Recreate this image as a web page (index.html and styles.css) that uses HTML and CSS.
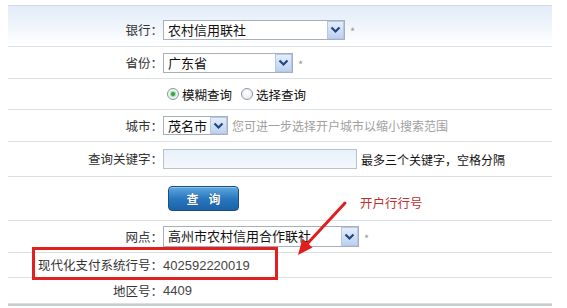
FILE: index.html
```html
<!DOCTYPE html>
<html lang="zh-CN">
<head>
<meta charset="utf-8">
<title>行号查询</title>
<link rel="stylesheet" href="styles.css">
</head>
<body>
<div class="page">
  <div class="panel">
    <div class="row row-head">
      <div class="label">银行<span class="colon">：</span></div>
      <div class="field">
        <div class="sel sel-bank"><span class="sel-text">农村信用联社</span><span class="sel-btn"><svg width="11" height="8" viewBox="0 0 11 8"><path d="M1.5 1.5 L5.5 5.5 L9.5 1.5" fill="none" stroke="#24467f" stroke-width="2.2"/></svg></span></div>
        <span class="req">*</span>
      </div>
    </div>
    <div class="row row-2">
      <div class="label">省份<span class="colon">：</span></div>
      <div class="field">
        <div class="sel sel-prov"><span class="sel-text">广东省</span><span class="sel-btn"><svg width="11" height="8" viewBox="0 0 11 8"><path d="M1.5 1.5 L5.5 5.5 L9.5 1.5" fill="none" stroke="#24467f" stroke-width="2.2"/></svg></span></div>
        <span class="req">*</span>
      </div>
    </div>
    <div class="row row-3">
      <div class="label"></div>
      <div class="field radios">
        <span class="radio checked"></span><span class="rlabel">模糊查询</span>
        <span class="radio"></span><span class="rlabel">选择查询</span>
      </div>
    </div>
    <div class="row row-4">
      <div class="label">城市<span class="colon">：</span></div>
      <div class="field">
        <div class="sel sel-city"><span class="sel-text">茂名市</span><span class="sel-btn"><svg width="11" height="8" viewBox="0 0 11 8"><path d="M1.5 1.5 L5.5 5.5 L9.5 1.5" fill="none" stroke="#24467f" stroke-width="2.2"/></svg></span></div>
        <span class="hint">您可进一步选择开户城市以缩小搜索范围</span>
      </div>
    </div>
    <div class="row row-5">
      <div class="label">查询关键字<span class="colon">：</span></div>
      <div class="field">
        <div class="kw"></div>
        <span class="note">最多三个关键字，空格分隔</span>
      </div>
    </div>
    <div class="row row-6">
      <div class="label"></div>
      <div class="field">
        <button class="btn" type="button">查询</button>
      </div>
    </div>
    <div class="row row-7">
      <div class="label">网点<span class="colon">：</span></div>
      <div class="field">
        <div class="sel sel-net"><span class="sel-text">高州市农村信用合作联社</span><span class="sel-btn"><svg width="11" height="8" viewBox="0 0 11 8"><path d="M1.5 1.5 L5.5 5.5 L9.5 1.5" fill="none" stroke="#24467f" stroke-width="2.2"/></svg></span></div>
        <span class="req">*</span>
      </div>
    </div>
    <div class="row row-8">
      <div class="label">现代化支付系统行号<span class="colon">：</span></div>
      <div class="field"><span class="val">402592220019</span></div>
    </div>
    <div class="row row-9">
      <div class="label">地区号<span class="colon">：</span></div>
      <div class="field"><span class="val">4409</span></div>
    </div>
    <div class="redbox"></div>
  </div>
  <span class="callout">开户行行号</span>
  <svg class="arrow" width="567" height="308" viewBox="0 0 567 308">
    <line x1="345" y1="203" x2="308" y2="243" stroke="#e01e1e" stroke-width="3" stroke-linecap="round"/>
    <polygon points="298,255 312.5,247.5 302.5,238.5" fill="#e01e1e"/>
  </svg>
</div>
</body>
</html>
```

FILE: styles.css
```css
html, body {
  margin: 0;
  padding: 0;
  background: #fff;
}
body {
  font-family: "Noto Sans CJK SC", "Noto Sans", sans-serif;
  font-size: 12px;
  color: #222;
}
.page {
  position: relative;
  width: 567px;
  height: 308px;
  overflow: hidden;
  padding-top: 5px;
  box-sizing: border-box;
}
.panel {
  position: relative;
  margin-left: 8px;
  width: 544px;
  border-top: 1px solid #d3dae3;
  border-bottom: 2px solid #c6cdd0;
}
.row {
  display: flex;
  align-items: center;
  border-bottom: 1px solid #dcdfe3;
  box-sizing: content-box;
}
.row:last-of-type { border-bottom: none; }
.row-head {
  height: 32px;
  padding-top: 8px;
  background: linear-gradient(#e2ebf8, #f6f9fd 70%, #fff);
}
.row-2 { height: 31px; }
.row-3 { height: 30px; }
.row-4 { height: 31px; }
.row-5 { height: 34px; }
.row-6 { height: 43px; }
.row-7 { height: 31px; }
.row-8 { height: 24px; }
.row-9 { height: 25px; }
.label {
  width: 155px;
  flex: none;
  text-align: right;
  color: #333;
  line-height: 16px;
  font-size: 12.5px;
}
.colon {
  font-family: "Noto Sans CJK TC", "Noto Sans CJK SC", sans-serif;
}
.field {
  display: flex;
  align-items: center;
}
.sel {
  display: flex;
  align-items: stretch;
  height: 20px;
  box-sizing: border-box;
  border: 1px solid #a7b0ba;
  background: #fff;
}
.sel-text {
  flex: 1;
  padding-left: 4px;
  font-size: 13px;
  line-height: 18px;
  color: #111;
  white-space: nowrap;
  overflow: hidden;
}
.sel-btn {
  width: 15px;
  border: 1px solid #b3c7e6;
  background: linear-gradient(#e3edfc, #bcd1f1);
  display: flex;
  align-items: center;
  justify-content: center;
}
.sel-bank { width: 182px; }
.sel-prov { width: 130px; }
.sel-city { width: 65px; height: 19px; }
.sel-net { width: 196px; height: 21px; }
.req {
  color: #999;
  font-size: 11px;
  margin-left: 5px;
  margin-top: 2px;
}
.radios { padding-left: 4px; }
.radio {
  width: 10px;
  height: 10px;
  border: 1px solid #8a96a3;
  border-radius: 50%;
  background: radial-gradient(circle at 50% 40%, #fff, #e4e7ea);
  display: flex;
  align-items: center;
  justify-content: center;
  margin-right: 3px;
}
.radio.checked::after {
  content: "";
  width: 4px;
  height: 4px;
  border-radius: 50%;
  background: #34a245;
  box-shadow: 0 0 1px 1px #9ad69f;
}
.rlabel {
  font-size: 12.5px;
  color: #111;
  margin-right: 9px;
}
.hint {
  color: #a0a0a0;
  margin-left: 4px;
}
.kw {
  width: 194px;
  height: 20px;
  box-sizing: border-box;
  border: 1px solid #b7c2ce;
  background: linear-gradient(#e8f0fa, #f4f8fc);
}
.note {
  margin-left: 4px;
  color: #111;
}
.btn {
  margin-left: 5px;
  width: 71px;
  height: 25px;
  border: 1px solid #1b4f82;
  border-radius: 4px;
  background: linear-gradient(#5fa8e0, #2a78c0 50%, #1c62a8);
  color: #fff;
  font-family: "Noto Sans CJK SC", sans-serif;
  font-size: 12px;
  font-weight: bold;
  letter-spacing: 10px;
  padding: 0 0 0 10px;
  text-shadow: 0 0 1px #0d3560;
  box-shadow: inset 0 1px 0 #8cc4ee;
}
.val {
  font-family: "Liberation Sans", Arial, sans-serif;
  font-size: 13px;
  color: #444;
}
.redbox {
  position: absolute;
  left: 24px;
  top: 241px;
  width: 240px;
  height: 27px;
  border: 3px solid #e0211f;
}
.callout {
  position: absolute;
  left: 360px;
  top: 193px;
  color: #c22f2f;
  font-size: 12.5px;
}
.arrow {
  position: absolute;
  left: 0;
  top: 0;
  pointer-events: none;
}
```
